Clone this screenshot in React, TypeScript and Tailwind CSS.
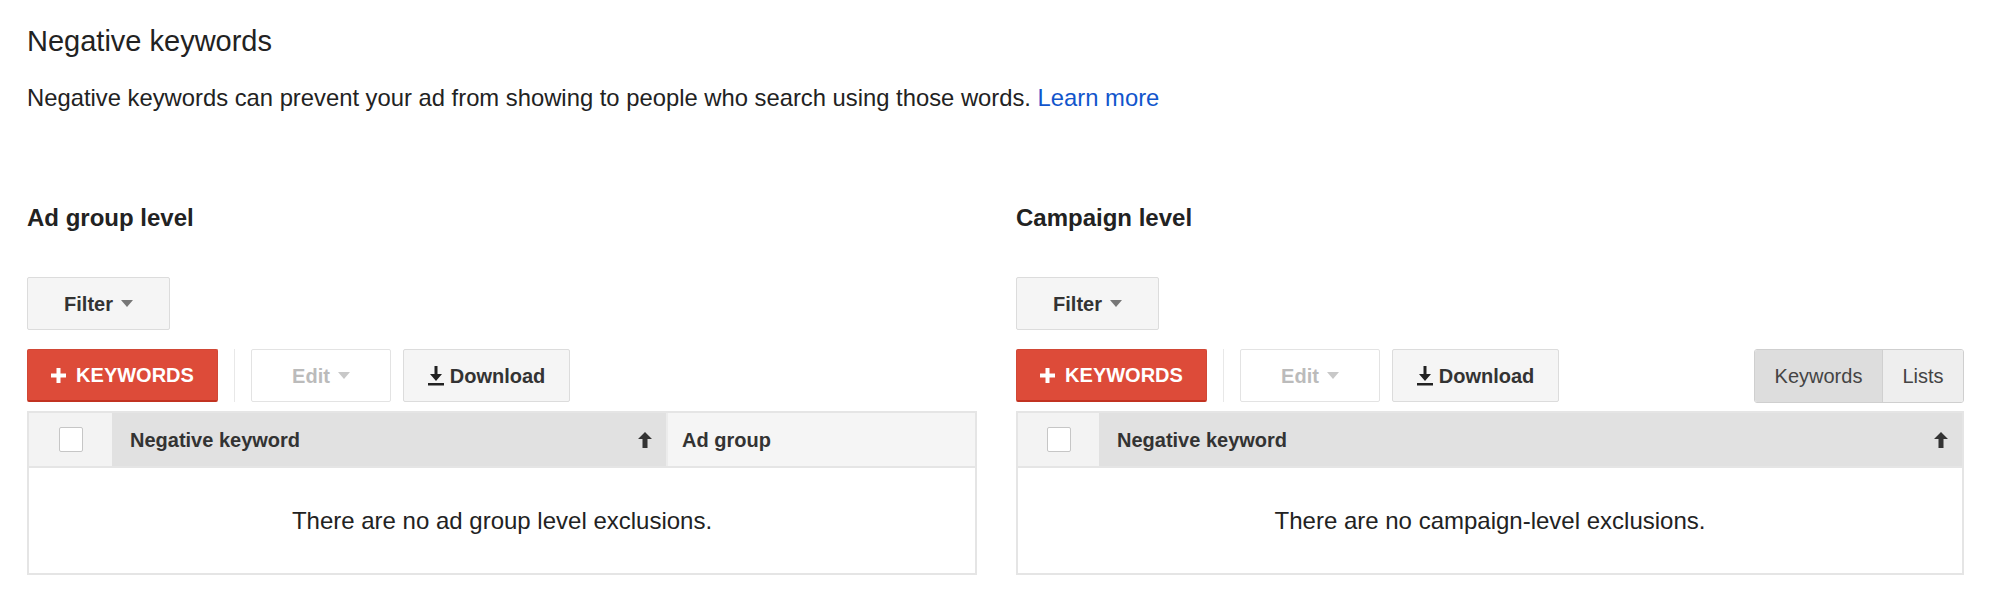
import React from "react";

const font = { fontFamily: '"Liberation Sans", Arial, sans-serif' };

function Caret({ color = "#777" }: { color?: string }) {
  return (
    <svg width="12" height="7" viewBox="0 0 12 7" className="ml-[8px]">
      <path d="M0 0h12L6 7z" fill={color} />
    </svg>
  );
}

function SortArrow() {
  return (
    <svg width="14" height="16" viewBox="0 0 14 16">
      <path d="M7 0L0 7h4.5v9h5V7H14z" fill="#333" />
    </svg>
  );
}

function DownloadIcon() {
  return (
    <svg width="16" height="20" viewBox="0 0 16 20" className="mr-[6px]">
      <path d="M6.5 0h3v8H14l-6 7-6-7h4.5z" fill="#222" />
      <rect x="0" y="17" width="16" height="2.5" fill="#222" />
    </svg>
  );
}

function PlusIcon() {
  return (
    <svg width="15" height="15" viewBox="0 0 15 15" className="mr-[10px]">
      <path d="M5.5 0h4v5.5H15v4H9.5V15h-4V9.5H0v-4h5.5z" fill="#fff" />
    </svg>
  );
}

function Checkbox() {
  return (
    <div className="w-[24px] h-[25px] bg-white border border-[#c6c6c6] rounded-[2px]" />
  );
}

function Toolbar({ toggle }: { toggle?: boolean }) {
  return (
    <div className="flex items-stretch h-[53px] mt-[19px]">
      <button className="w-[191px] flex items-center justify-center bg-[#dd4b39] border border-[#d14836] border-b-[2px] border-b-[#c23321] rounded-[2px] text-white font-bold text-[20px]">
        <PlusIcon />
        KEYWORDS
      </button>
      <div className="w-px bg-[#e8e8e8] mx-[16px]" />
      <button className="w-[140px] flex items-center justify-center bg-white border border-[#e3e3e3] rounded-[2px] text-[#bbbbbb] font-bold text-[20px]">
        Edit
        <Caret color="#c8c8c8" />
      </button>
      <button className="ml-[12px] w-[167px] flex items-center justify-center bg-[#f5f5f5] border border-[#dcdcdc] rounded-[2px] text-[#333] font-bold text-[20px]">
        <DownloadIcon />
        Download
      </button>
      {toggle && (
        <div className="ml-auto flex h-[54px] border border-[#cfcfcf] rounded-[3px] overflow-hidden text-[20px] text-[#444]">
          <div className="w-[128px] flex items-center justify-center bg-[#dddddd] border-r border-[#d0d0d0]">
            Keywords
          </div>
          <div className="w-[80px] flex items-center justify-center bg-[#eeeeee]">
            Lists
          </div>
        </div>
      )}
    </div>
  );
}

function Panel({
  title,
  adGroupCol,
  empty,
}: {
  title: string;
  adGroupCol?: boolean;
  empty: string;
}) {
  return (
    <div className="flex flex-col">
      <h2 className="text-[24px] leading-[30px] font-bold text-[#222]">{title}</h2>
      <div className="mt-[44px]">
        <button className="w-[143px] h-[53px] flex items-center justify-center bg-[#f5f5f5] border border-[#dcdcdc] rounded-[2px] text-[#333] font-bold text-[20px]">
          Filter
          <Caret />
        </button>
      </div>
      <Toolbar toggle={!adGroupCol} />
      <div className="mt-[9px] border-2 border-[#e5e5e5]">
        <div className="flex h-[55px] border-b-2 border-[#e5e5e5] text-[20px] font-bold text-[#333]">
          <div className={`${adGroupCol ? "w-[83px]" : "w-[81px]"} flex items-center justify-center bg-[#f3f3f3]`}>
            <Checkbox />
          </div>
          <div
            className={`${adGroupCol ? "w-[554px]" : "flex-1"} flex items-center justify-between bg-[#e1e1e1] pl-[18px] pr-[14px]`}
          >
            <span>Negative keyword</span>
            <SortArrow />
          </div>
          {adGroupCol && (
            <div className="flex-1 flex items-center bg-[#f5f5f5] border-l-2 border-[#ececec] pl-[14px]">
              Ad group
            </div>
          )}
        </div>
        <div className="h-[105px] flex items-center justify-center bg-white text-[24px] text-[#222]">
          {empty}
        </div>
      </div>
    </div>
  );
}

export default function App() {
  return (
    <div style={font} className="bg-white w-[1999px] h-[616px] pl-[27px] pr-[35px] pt-[23px]">
      <h1 className="text-[29px] leading-[36px] text-[#222] font-normal">Negative keywords</h1>
      <p className="mt-[23px] text-[23.8px] leading-[32px] text-[#222]">
        Negative keywords can prevent your ad from showing to people who search using those words.{" "}
        <a className="text-[#1155cc]">Learn more</a>
      </p>
      <div className="mt-[89px] grid grid-cols-[950px_948px] gap-[39px]">
        <Panel title="Ad group level" adGroupCol empty="There are no ad group level exclusions." />
        <Panel title="Campaign level" empty="There are no campaign-level exclusions." />
      </div>
    </div>
  );
}
